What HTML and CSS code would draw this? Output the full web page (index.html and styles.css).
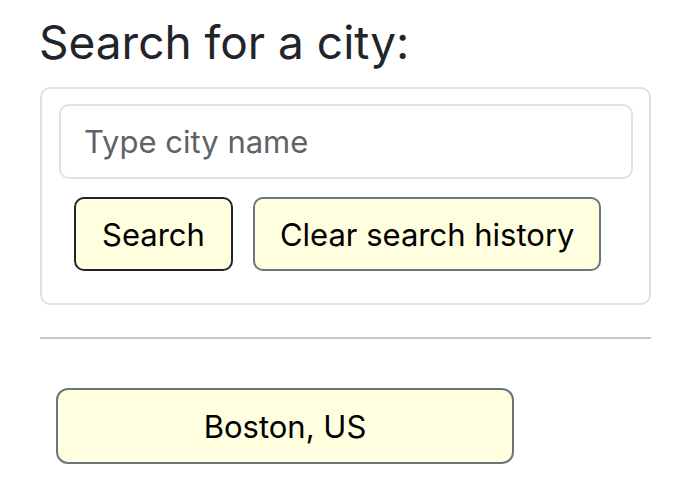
FILE: index.html
```html
<!DOCTYPE html>
<html lang="en">
<head>
<meta charset="utf-8">
<title>Weather search</title>
<link rel="stylesheet" href="styles.css">
</head>
<body>
<main class="page">
  <h1 class="title">Search for a city:</h1>
  <section class="card">
    <input class="city-input" type="text" placeholder="Type city name">
    <div class="actions">
      <button class="btn btn-dark" type="button">Search</button>
      <button class="btn btn-grey" type="button">Clear search history</button>
    </div>
  </section>
  <hr class="divider">
  <div class="history">
    <button class="btn btn-grey history-item" type="button">Boston, US</button>
  </div>
</main>
</body>
</html>
```
FILE: styles.css
```css
* { box-sizing: border-box; }
html, body { margin: 0; padding: 0; background: #fff; }
body {
  font-family: Inter, "Liberation Sans", sans-serif;
  color: #212529;
}
.page {
  width: 611px;
  margin-left: 40px;
  padding-top: 14px;
}
.title {
  margin: 0 0 0 -1px;
  font-size: 46px;
  font-weight: 400;
  line-height: 56px;
  letter-spacing: 0;
  height: 73px;
}
.card {
  border: 2px solid #dee2e6;
  border-radius: 10px;
  padding: 15px 16px 32px 17px;
}
.city-input {
  display: block;
  width: 100%;
  height: 75px;
  border: 2px solid #dee2e6;
  border-radius: 10px;
  padding: 0 23px;
  font-family: inherit;
  font-size: 31px;
  letter-spacing: 0;
  color: #212529;
  outline: none;
}
.city-input::placeholder { color: #5f6368; }
.actions {
  display: flex;
  gap: 20px;
  margin-top: 18px;
  padding-left: 15px;
}
.btn {
  height: 74px;
  padding: 0 26px;
  background: #ffffe0;
  border-radius: 10px;
  font-family: inherit;
  font-size: 31px;
  letter-spacing: 0;
  color: #000;
}
.btn-dark { border: 2px solid #212529; }
.btn-grey { border: 2px solid #6c757d; }
.btn-grey:not(.history-item) { padding: 0 25px; }
.divider {
  margin: 32px 0 0;
  border: 0;
  border-top: 2px solid #c8c8c8;
}
.history {
  padding: 49px 0 0 16px;
}
.history-item {
  width: 458px;
  height: 76px;
  border-radius: 12px;
}
```
